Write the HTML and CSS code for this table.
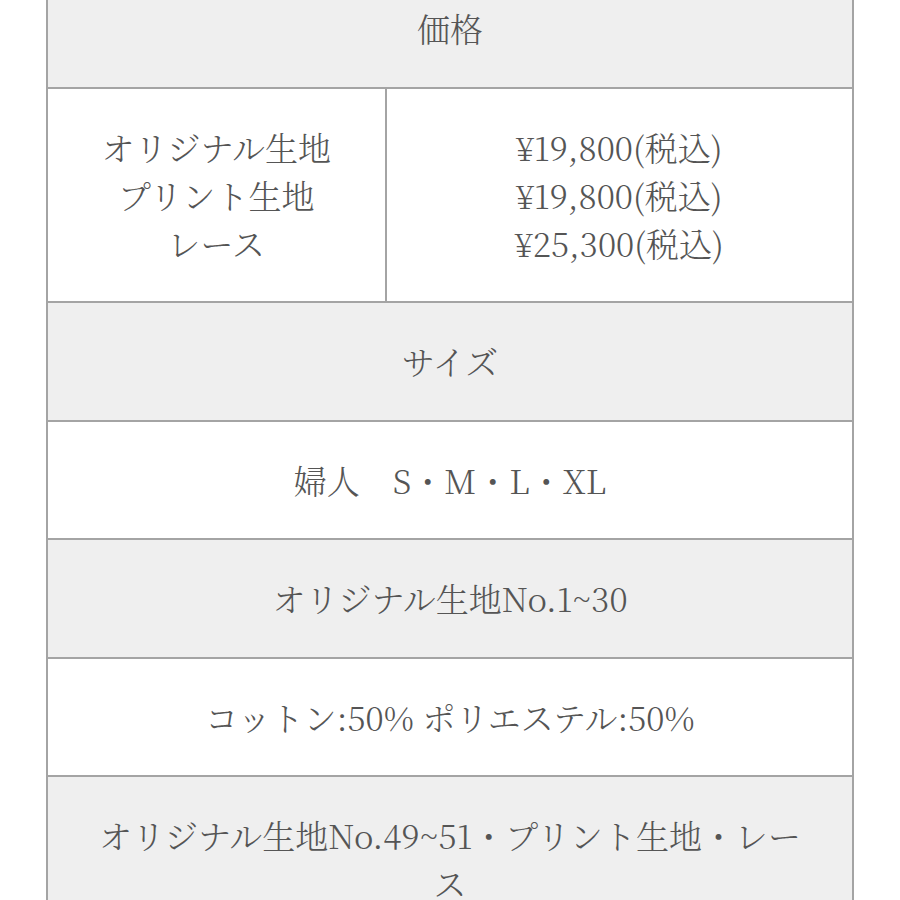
FILE: index.html
```html
<!DOCTYPE html>
<html lang="ja">
<head>
<meta charset="utf-8">
<link rel="stylesheet" href="styles.css">
</head>
<body>
<div class="wrap">
<table class="spec">
<tr><th class="hd" colspan="2">価格</th></tr>
<tr>
<td class="left">オリジナル生地<br>プリント生地<br>レース</td>
<td class="right">¥19,800(税込)<br>¥19,800(税込)<br>¥25,300(税込)</td>
</tr>
<tr><th class="hd" colspan="2">サイズ</th></tr>
<tr><td colspan="2">婦人　S・M・L・XL</td></tr>
<tr><th class="hd" colspan="2">オリジナル生地No.1~30</th></tr>
<tr><td colspan="2">コットン:50% ポリエステル:50%</td></tr>
<tr><th class="hd" colspan="2">オリジナル生地No.49~51・プリント生地・レース</th></tr>
</table>
</div>
</body>
</html>
```
FILE: styles.css
```css
html, body {
  margin: 0;
  padding: 0;
  background: #fff;
}
.wrap {
  padding: 0 46px;
  margin-top: -32px;
}
.spec {
  width: 100%;
  border-collapse: collapse;
  font-family: "Noto Serif CJK JP", "Liberation Serif", "Noto Sans CJK JP", serif;
  font-size: 33px;
  font-weight: 300;
  line-height: 48px;
  color: #555;
}
.spec th, .spec td {
  border: 2px solid #a4a4a4;
  padding: 34px 40px 34.5px;
  text-align: center;
  font-weight: 300;
  vertical-align: middle;
}
.spec th.hd {
  background: #efefef;
}
.spec td {
  background: #fff;
}
.spec td.left {
  width: 42%;
}
```
